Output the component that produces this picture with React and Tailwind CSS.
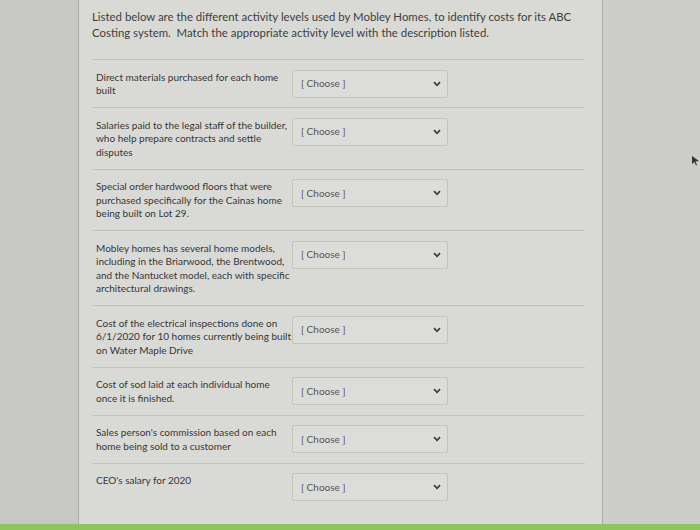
import React from "react";

const rows = [
  { text: "Direct materials purchased for each home built" },
  { text: "Salaries paid to the legal staff of the builder, who help prepare contracts and settle disputes" },
  { text: "Special order hardwood floors that were purchased specifically for the Cainas home being built on Lot 29." },
  { text: "Mobley homes has several home models, including in the Briarwood, the Brentwood, and the Nantucket model, each with specific architectural drawings." },
  { text: "Cost of the electrical inspections done on 6/1/2020 for 10 homes currently being built on Water Maple Drive" },
  { text: "Cost of sod laid at each individual home once it is finished." },
  { text: "Sales person's commission based on each home being sold to a customer" },
  { text: "CEO's salary for 2020" },
];

const Chevron = () => (
  <svg width="8" height="6" viewBox="0 0 8 6" className="shrink-0">
    <path d="M1 1.2 L4 4.3 L7 1.2" fill="none" stroke="#3c3c3c" strokeWidth="1.7" />
  </svg>
);

const App = () => {
  return (
    <div
      className="relative w-[700px] h-[530px] overflow-hidden bg-[#cacbc7] flex flex-col"
      style={{ fontFamily: "Lato, 'Open Sans', sans-serif" }}
    >
      <div className="flex flex-1 min-h-0">
        <div className="w-[78px] shrink-0 bg-[#c7c8c4]" />
        <div className="w-[525px] shrink-0 bg-[#d9dad6] border-l border-r border-[#abaca8] pl-[13px] pr-[17px] pt-[9px]">
          <p className="text-[11.4px] leading-[16px] text-[#3e3e3e] whitespace-nowrap">
            Listed below are the different activity levels used by Mobley Homes, to identify costs for its ABC
            <br />
            Costing system.&nbsp; Match the appropriate activity level with the description listed.
          </p>
          <div className="mt-[18px]">
            {rows.map((r, i) => (
              <div key={i} className="flex items-start border-t border-[#c2c3bf] py-[9.5px] pl-[4px]">
                <div className="w-[196px] shrink-0 text-[10px] leading-[13.5px] text-[#363636] pt-[1px]">
                  {r.text}
                </div>
                <div className="w-[156px] h-[28px] border border-[#c3c4c0] bg-[#dcddd9] rounded-[2px] flex items-center justify-between pl-[8px] pr-[6px]">
                  <span className="text-[10px] text-[#555]">[ Choose ]</span>
                  <Chevron />
                </div>
              </div>
            ))}
          </div>
        </div>
        <div className="flex-1 bg-[#cdcecb]" />
      </div>
      <div className="h-[6px] bg-[#8cc65a] shrink-0" />
      <svg className="absolute left-[692px] top-[156px]" width="8" height="10" viewBox="0 0 8 10">
        <path d="M0 0 L7 5 L3.5 5.5 L5 9 L4 9.5 L2.5 6 L0 8 Z" fill="#333" />
      </svg>
    </div>
  );
};

export default App;
